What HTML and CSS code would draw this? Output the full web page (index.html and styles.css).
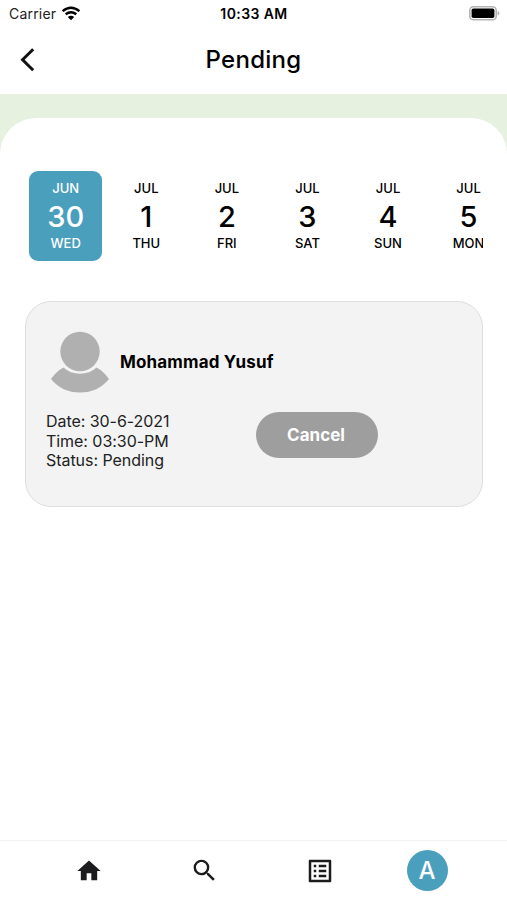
FILE: index.html
```html
<!DOCTYPE html>
<html lang="en">
<head>
<meta charset="utf-8">
<title>Pending</title>
<link rel="stylesheet" href="styles.css">
</head>
<body>
<div class="app">
  <div class="status">
    <div class="carrier"><span>Carrier</span>
      <svg width="20" height="15" viewBox="0 0 20 15" fill="none" stroke="#000" stroke-width="2.4"><path d="M1.6 5.1Q10-1.8 18.4 5.1M4.7 8.3Q10 4.1 15.3 8.3"/><path d="M10 14.2 6.8 11Q10 8.4 13.2 11Z" fill="#000" stroke="none"/></svg>
    </div>
    <span class="clock">10:33 AM</span>
    <svg class="battery" width="31" height="15" viewBox="0 0 31 15"><rect x=".8" y=".8" width="26.4" height="13" rx="3.6" fill="#fff" stroke="#b4b4b4" stroke-width="1.6"/><rect x="2.6" y="2.6" width="22.8" height="9.4" rx="1.7"/><path d="M28.6 5q1.7.6 1.7 2.3t-1.7 2.3z" fill="#b4b4b4"/></svg>
  </div>
  <header class="header">
    <svg class="back" width="16" height="24" viewBox="0 0 16 24" fill="none" stroke="#111" stroke-width="3"><path d="M13.2 1.2 2.6 11.7 13.2 22.2"/></svg>
    <h1>Pending</h1>
  </header>
  <main class="backdrop">
    <div class="panel">
      <div class="dates">
        <div class="day selected"><span>JUN</span><b>30</b><span>WED</span></div>
        <div class="day"><span>JUL</span><b>1</b><span>THU</span></div>
        <div class="day"><span>JUL</span><b>2</b><span>FRI</span></div>
        <div class="day"><span>JUL</span><b>3</b><span>SAT</span></div>
        <div class="day"><span>JUL</span><b>4</b><span>SUN</span></div>
        <div class="day"><span>JUL</span><b>5</b><span>MON</span></div>
      </div>
      <section class="card">
        <div class="person">
          <svg width="60" height="62" viewBox="0 0 60 62" fill="#b0b0b0"><circle cx="30" cy="20.5" r="19.7"/><path d="M13.5 36.5Q20 42.7 30 42.7T46.5 36.5Q54 40.5 59 48Q48 61.5 30 61.5T1 48Q6 40.5 13.5 36.5Z"/></svg>
          <h2>Mohammad Yusuf</h2>
        </div>
        <div class="details">
          <div class="lines">
            <div>Date: 30-6-2021</div>
            <div>Time: 03:30-PM</div>
            <div>Status: Pending</div>
          </div>
          <button class="cancel">Cancel</button>
        </div>
      </section>
    </div>
  </main>
  <nav class="tabs">
    <div class="tab"><svg width="28" height="28" viewBox="0 0 24 24"><path d="M10 20v-6h4v6h5v-8h3L12 3 2 12h3v8z"/></svg></div>
    <div class="tab"><svg width="29" height="29" viewBox="0 0 24 24"><path d="M15.5 14h-.79l-.28-.27A6.471 6.471 0 0 0 16 9.5 6.5 6.5 0 1 0 9.5 16c1.61 0 3.09-.59 4.23-1.57l.27.28v.79l5 4.99L20.49 19l-4.99-5zm-6 0C7.01 14 5 11.99 5 9.5S7.01 5 9.5 5 14 7.01 14 9.5 11.99 14 9.5 14z"/></svg></div>
    <div class="tab"><svg width="30" height="30" viewBox="0 0 24 24"><path d="M19 5v14H5V5h14m1.1-2H3.9c-.5 0-.9.4-.9.9v16.2c0 .4.4.9.9.9h16.2c.4 0 .9-.5.9-.9V3.900c0-.5-.5-.9-.9-.9zM11 7h6v2h-6V7zm0 4h6v2h-6v-2zm0 4h6v2h-6zM7 7h2v2H7zm0 4h2v2H7zm0 4h2v2H7z"/></svg></div>
    <div class="tab"><span class="avatar">A</span></div>
  </nav>
</div>
</body>
</html>
```
FILE: styles.css
```css
* { box-sizing: border-box; }
body { margin: 0; font-family: Inter, "Liberation Sans", sans-serif; color: #000; background: #fff; }
svg { display: block; flex: none; }
.app { height: 900px; display: flex; flex-direction: column; overflow: hidden; }
.status { height: 28px; display: grid; grid-template-columns: 1fr auto 1fr; align-items: center; padding: 0 7px 2px 9px; font-size: 14px; }
.carrier { display: flex; align-items: center; gap: 5px; color: #222; letter-spacing: .2px; }
.clock { font-weight: 600; letter-spacing: .4px; margin-right: 1px; }
.battery { justify-self: end; }
.header { height: 66px; display: grid; grid-template-columns: 1fr auto 1fr; align-items: center; padding: 0 20px 3px; }
.header h1 { margin: 0; font-size: 24px; font-weight: 450; line-height: 30px; letter-spacing: .3px; }
.backdrop { flex: 1; background: #e6f1df; padding-top: 24px; display: flex; }
.panel { flex: 1; min-width: 0; background: #fff; border-radius: 36px 36px 0 0; padding: 53px 24px 0 25px; }
.dates { display: flex; gap: 7.2px; padding-left: 4px; overflow: hidden; }
.day { flex: none; width: 73.4px; height: 90px; border-radius: 9px; display: flex; flex-direction: column; align-items: center; padding-top: 9px; font-size: 13px; font-weight: 500; line-height: 17px; }
.day b { font-size: 29px; font-weight: 450; line-height: 36px; padding-top: 2px; }
.selected { background: #4a9fbd; color: #fff; }
.card { margin-top: 40px; height: 206px; background: #f3f3f3; border: 1px solid #dedede; border-radius: 26px; padding: 29px 20px 0; }
.person { display: flex; align-items: center; gap: 10px; padding-left: 4px; }
.person h2 { margin: 0; font-size: 17px; font-weight: 700; letter-spacing: .15px; }
.details { display: flex; align-items: center; margin-top: 18px; }
.lines { width: 210px; font-size: 16px; line-height: 19.6px; letter-spacing: -.05px; color: #222; padding-top: 1px; }
.cancel { width: 122px; height: 46px; margin-top: -12px; border: 0; border-radius: 23px; background: #9e9e9e; color: #fff; font: 700 17px Inter, sans-serif; padding: 0 2px 0 0; }
.tabs { height: 60px; border-top: 1px solid #f3f3f3; display: grid; grid-template-columns: 115px 116px 115px 100px; padding-left: 31px; align-items: center; }
.tab { display: flex; justify-content: center; fill: #1c1c1e; }
.avatar { width: 41px; height: 41px; border-radius: 50%; background: #4a9fbd; color: #fff; display: flex; align-items: center; justify-content: center; font-size: 24px; font-weight: 500; }
```
